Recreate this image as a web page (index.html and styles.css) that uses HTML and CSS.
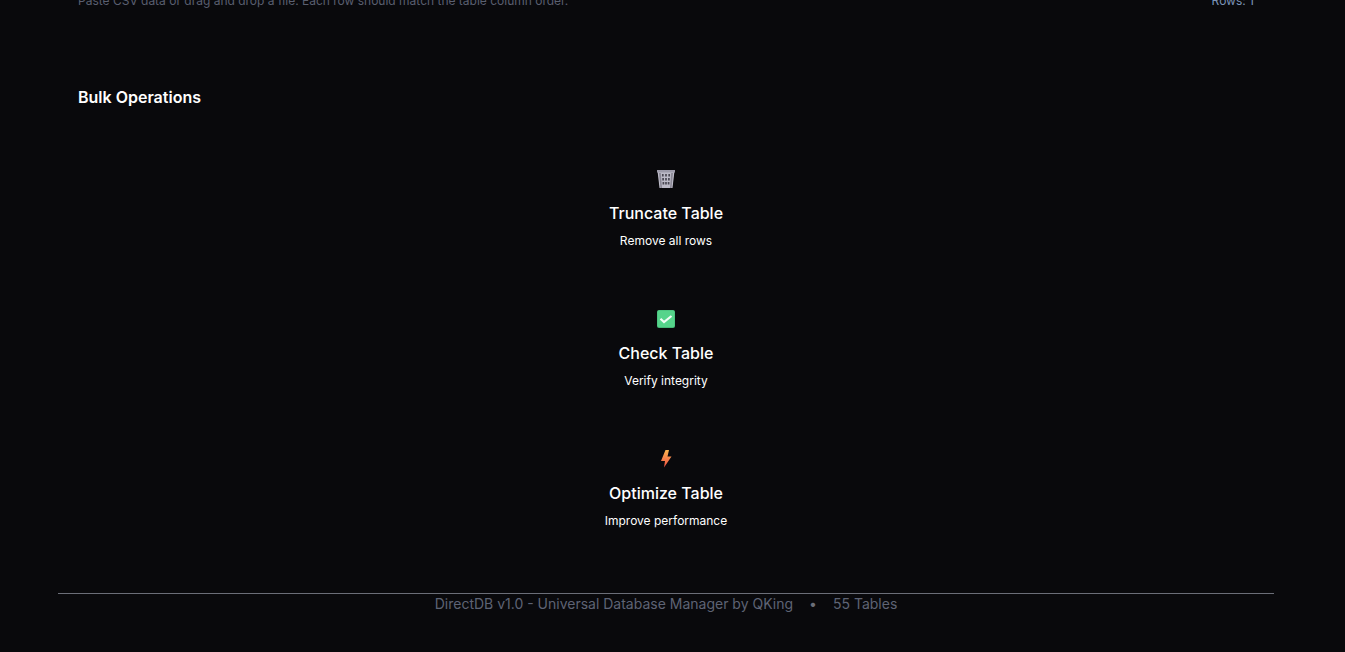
FILE: index.html
```html
<!DOCTYPE html>
<html lang="en">
<head>
<meta charset="UTF-8">
<meta name="viewport" content="width=device-width, initial-scale=1.0">
<title>DirectDB</title>
<link rel="stylesheet" href="styles.css">
</head>
<body>
<main class="page">
    <div class="import-hint">
        <span class="hint-text">Paste CSV data or drag and drop a file. Each row should match the table column order.</span>
        <span class="row-count">Rows: 1</span>
    </div>

    <section class="bulk">
        <h3 class="bulk-title">Bulk Operations</h3>

        <div class="op-list">
            <div class="op">
                <svg class="op-icon" viewBox="0 0 18 18">
                    <path d="M.5 1h17l-2 17h-13z" fill="#bdbbc8"/>
                    <rect x="0" y="0" width="18" height="2.500" fill="#9d9baa"/>
                    <path d="M2 3l1.500 15h1.500l-1.200-15zM16 3l-1.500 15h-1.500l1.200-15z" fill="#8a8895"/>
                    <path d="M5.800 4v2.500M9 4v2.500M12.200 4v2.500M6.100 8v2.500M9 8v2.500M11.900 8v2.500M6.400 12v2.500M9 12v2.500M11.600 12v2.500" stroke="#4a4853" stroke-width="1.700"/>
                </svg>
                <div class="op-name">Truncate Table</div>
                <div class="op-desc">Remove all rows</div>
            </div>
            <div class="op">
                <svg class="op-icon" viewBox="0 0 18 18">
                    <rect width="18" height="18" rx="2" fill="#45b877"/>
                    <rect x=".5" y=".5" width="17" height="16.500" rx="1.500" fill="#55d48b"/>
                    <path d="M3.500 8.800l3.500 3.200 7.500-6" fill="none" stroke="#effdf5" stroke-width="2.200"/>
                </svg>
                <div class="op-name">Check Table</div>
                <div class="op-desc">Verify integrity</div>
            </div>
            <div class="op">
                <svg class="op-icon" viewBox="0 0 18 18">
                    <defs>
                        <linearGradient id="bolt" x1="0" y1="0" x2="0" y2="1">
                            <stop offset="0" stop-color="#fcb650"/>
                            <stop offset="1" stop-color="#f04e44"/>
                        </linearGradient>
                    </defs>
                    <path d="M8.500 0H12l-1.500 6.500h4L7 17.500 8 11H4z" fill="url(#bolt)"/>
                </svg>
                <div class="op-name">Optimize Table</div>
                <div class="op-desc">Improve performance</div>
            </div>
        </div>
    </section>

    <footer class="footer">
        <span>DirectDB v1.0 - Universal Database Manager by QKing</span>
        <span class="dot">•</span>
        <span>55 Tables</span>
    </footer>
</main>
</body>
</html>
```

FILE: styles.css
```css
html, body {
  height: 100%;
  overflow: hidden;
}
body {
  font-family: 'Inter', 'Liberation Sans', sans-serif;
  background-color: #09090c;
  margin: 0;
  color: #fff;
}
.page {
  width: 1216px;
  margin: -9px 0 0 58px;
}
.import-hint {
  display: flex;
  justify-content: space-between;
  padding: 0 20px;
  font-size: 12px;
  line-height: 20px;
}
.hint-text {
  color: #5a5f70;
}
.row-count {
  color: #7b93b8;
}
.bulk {
  padding: 0 20px;
}
.bulk-title {
  margin: 76px 0 0;
  font-size: 16px;
  line-height: 20px;
  font-weight: 600;
}
.op-list {
  margin-top: 63px;
  display: flex;
  flex-direction: column;
}
.op {
  height: 140px;
  display: flex;
  flex-direction: column;
  align-items: center;
}
.op-icon {
  width: 18px;
  height: 18px;
}
.op-name {
  margin-top: 15px;
  font-size: 16px;
  line-height: 20px;
  font-weight: 500;
}
.op-desc {
  margin-top: 10px;
  font-size: 12px;
  line-height: 16px;
}
.footer {
  border-top: 1px solid #6b6e78;
  margin-top: 3px;
  display: flex;
  justify-content: center;
  gap: 16px;
  color: #5e6374;
  font-size: 14px;
  line-height: 20px;
}
.dot {
  color: #6b6e78;
}
```
